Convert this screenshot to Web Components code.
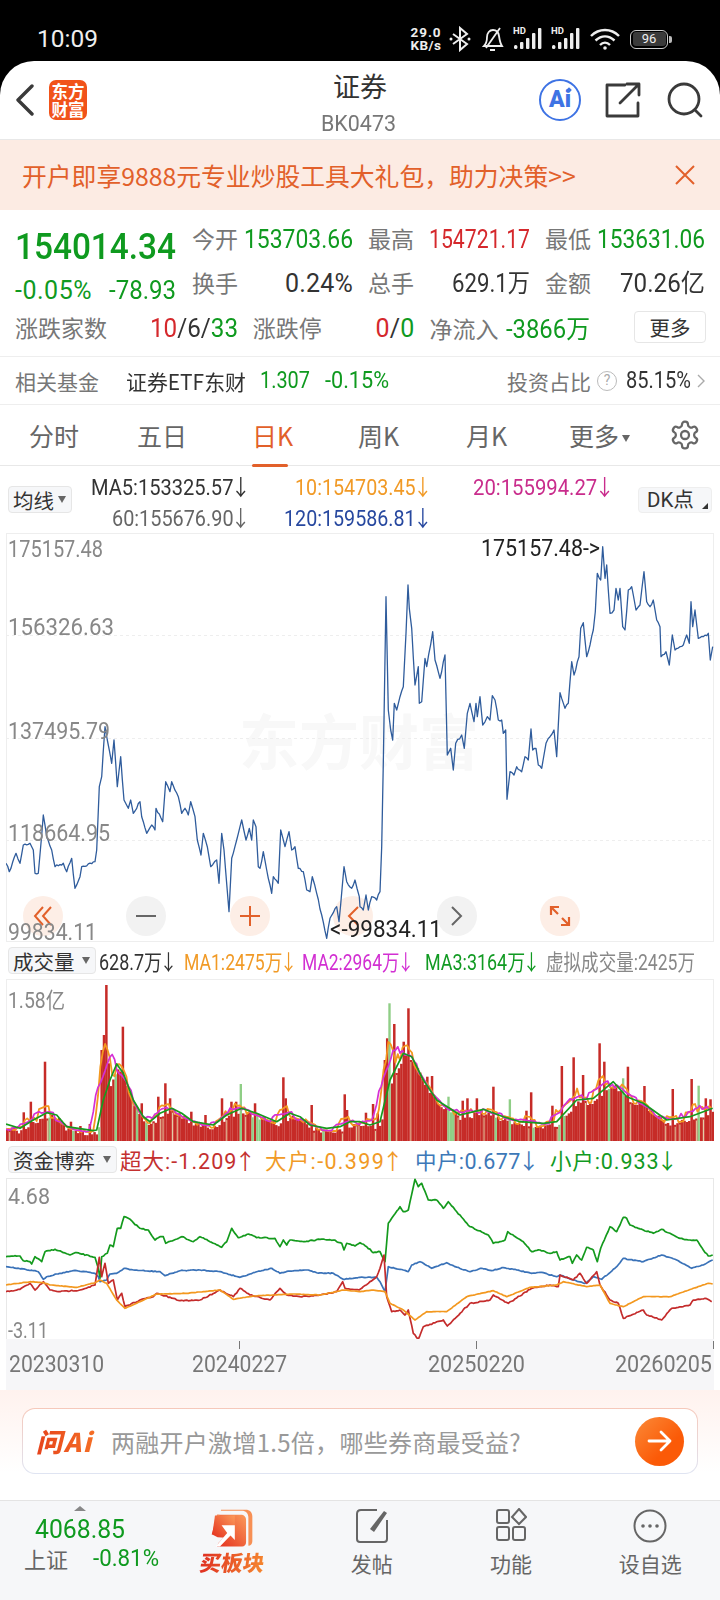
<!DOCTYPE html>
<html lang="zh">
<head>
<meta charset="utf-8">
<title>证券</title>
<style>
  html, body { margin: 0; padding: 0; background: #000; }
  body { width: 720px; height: 1600px; overflow: hidden; font-family: Roboto, "Noto Sans CJK SC", sans-serif; color: #333; }
  main { display: flex; flex-direction: column; height: 1539px; background: #fff; border-radius: 34px 34px 0 0; overflow: hidden; }
  indicator-head i { font-style: normal; font-family: "Noto Sans CJK SC", sans-serif; display: inline-block; margin: 0 -3px; }
</style>
</head>
<body>
<status-bar></status-bar>
<main>
  <stock-header></stock-header>
  <promo-banner>开户即享9888元专业炒股工具大礼包，助力决策&gt;&gt;</promo-banner>
  <quote-panel></quote-panel>
  <fund-row></fund-row>
  <period-tabs></period-tabs>
  <ma-legend></ma-legend>
  <kline-chart></kline-chart>
  <indicator-head>
    <pick-button slot="pick" style="--w:88px">成交量</pick-button>
    <span data-w="76" style="color:#333;margin-right:9px">628.7万<i>↓</i></span>
    <span data-w="111" style="color:#f19a26;margin-right:7px">MA1:2475万<i>↓</i></span>
    <span data-w="110" style="color:#d22fd2;margin-right:13px">MA2:2964万<i>↓</i></span>
    <span data-w="113" style="color:#119a22;margin-right:8px">MA3:3164万<i>↓</i></span>
    <span data-w="149" style="color:#888">虚拟成交量:2425万</span>
  </indicator-head>
  <volume-chart></volume-chart>
  <indicator-head>
    <pick-button slot="pick" style="--w:109px">资金博弈</pick-button>
    <span data-w="134" style="color:#c4302f;margin-right:11px">超大:-1.209<i>↑</i></span>
    <span data-w="137" style="color:#f19a26;margin-right:13px">大户:-0.399<i>↑</i></span>
    <span data-w="122" style="color:#3d78b8;margin-right:13px">中户:0.677<i>↓</i></span>
    <span data-w="126" style="color:#119a22">小户:0.933<i>↓</i></span>
  </indicator-head>
  <flow-chart></flow-chart>
  <date-axis></date-axis>
  <ask-box></ask-box>
  <bottom-nav></bottom-nav>
</main>

<script>
const GREEN = '#0f9a1f', RED = '#d5282c';

// the reference font has narrower digits than anything installed:
// too wide gets squeezed sideways to the measured width, too narrow gets some spacing
function fit(root) {
  root.querySelectorAll('[data-w]').forEach(el => {
    const target = +el.dataset.w;
    el.style.display = 'inline-block';
    el.style.whiteSpace = 'nowrap';
    el.style.flexShrink = '0';
    const w = el.getBoundingClientRect().width;
    if (w > target) {
      el.style.width = target + 'px';
      el.style.transformOrigin = '0 50%';
      el.style.transform = `scaleX(${(target / w).toFixed(3)})`;
    } else {
      el.style.letterSpacing = ((target - w) / el.textContent.length).toFixed(2) + 'px';
    }
  });
}

// small helper, every element is the same shape: css + markup in an open shadow root
function comp(name, css, html, after) {
  customElements.define(name, class extends HTMLElement {
    connectedCallback() {
      this.attachShadow({ mode: 'open' });
      this.shadowRoot.innerHTML = `<style>${css}</style>${html}`;
      if (after) after(this.shadowRoot, this);
      fit(this.shadowRoot);
    }
  });
}

// seeded noise so the charts come out the same each time
let seed = 7;
function rnd() { seed = (seed * 16807) % 2147483647; return seed / 2147483647; }

// zoom crops were taken at 3x, turn those numbers into page coordinates
function pts(arr, ox, oy) { return arr.map(p => [ox + p[0] / 3, oy + p[1] / 3]); }

function jitter(points, amp) {
  const out = [];
  for (let i = 0; i < points.length - 1; i++) {
    const a = points[i], b = points[i + 1];
    out.push(a);
    const n = Math.floor((b[0] - a[0]) / 1.6);
    for (let k = 1; k < n; k++) {
      const t = k / n;
      out.push([a[0] + (b[0] - a[0]) * t, a[1] + (b[1] - a[1]) * t + (rnd() - 0.5) * amp]);
    }
  }
  out.push(points[points.length - 1]);
  return out;
}

function pathOf(points) { return points.map(p => p[0].toFixed(1) + ',' + p[1].toFixed(1)).join(' '); }

function line(points, color, width) {
  return `<polyline points="${pathOf(points)}" fill="none" stroke="${color}" stroke-width="${width}" stroke-linejoin="round"/>`;
}

const SIGNAL = `<svg width="32" height="24" viewBox="0 0 32 24" fill="#eee"><rect x="1" y="18" width="3.400" height="4" rx="1.500"/><rect x="7" y="15" width="3.400" height="7" rx="1"/><rect x="13" y="11" width="3.400" height="11" rx="1"/><rect x="19" y="6" width="3.400" height="16" rx="1"/><rect x="25" y="1" width="3.400" height="21" rx="1"/></svg>`;

comp('status-bar', `
  :host { display: flex; height: 61px; box-sizing: border-box; background: #000; color: #fff; position: relative; }
  .time { font-size: 24.500px; margin: 24px 0 0 37px; color: #eee; line-height: 30px; }
  .right { margin-left: auto; display: flex; align-items: center; height: 30px; margin-top: 24px; padding-right: 48px; }
  .speed { font-size: 13.500px; font-weight: 700; line-height: 13.500px; width: 32px; text-align: center; color: #eee; white-space: nowrap; }
  svg { display: block; }
  .sig { position: relative; width: 32px; height: 24px; margin-left: 6px; }
  .sig b { position: absolute; left: 0; top: -1px; font-size: 9.500px; line-height: 10px; color: #eee; }
  .bat { margin-left: 10px; width: 38px; height: 19px; border: 1.500px solid #ccc; border-radius: 6px; box-sizing: border-box; padding: 1.500px; }
  .bat span { display: block; background: #3a3a3a; height: 100%; border-radius: 3px; color: #eee; font-size: 13px; line-height: 13px; text-align: center; }
  .tip { width: 3px; height: 7px; margin-left: 1px; background: #bbb; border-radius: 0 2px 2px 0; }
`, `
  <div class="time">10:09</div>
  <div class="right">
    <div class="speed"><span data-w="31">29.0</span><br><span data-w="31">KB/s</span></div>
    <svg style="margin-left:7px" width="22" height="26" viewBox="0 0 22 26" fill="none" stroke="#eee" stroke-width="2"><path d="M4 8l14 10-7 6V2l7 6L4 18"/><circle cx="2" cy="13" r="1.500" fill="#eee" stroke="none"/><circle cx="20" cy="13" r="1.500" fill="#eee" stroke="none"/></svg>
    <svg style="margin-left:10px" width="23" height="26" viewBox="0 0 23 26" fill="none" stroke="#eee" stroke-width="1.800"><path d="M3 20c2-2 3-5 3-9 0-4 2.500-7 6-7 3.500 0 5.500 2.500 6 6 .5 3.500 1 7 3 10zM9 24h5"/><path d="M19 2L5 22"/></svg>
    <div class="sig" style="margin-left:9px"><b>HD</b>${SIGNAL}</div>
    <div class="sig"><b>HD</b>${SIGNAL}</div>
    <svg style="margin-left:7px" width="30" height="24" viewBox="0 0 30 24" fill="none" stroke="#eee" stroke-width="2.400"><path d="M1 9c8-8 20-8 28 0M5.500 13.500c6-5.500 13-5.500 19 0M10 18c3-3 7-3 10 0"/><circle cx="15" cy="21" r="1.800" fill="#eee" stroke="none"/></svg>
    <div class="bat"><span>96</span></div><div class="tip"></div>
  </div>
`);

comp('stock-header', `
  :host { display: flex; align-items: center; height: 79px; box-sizing: border-box; border-bottom: 1px solid #e8e8e8; padding-left: 16px; position: relative; }
  .logo { width: 38px; height: 40px; margin-left: 15px; background: #f1531a; border-radius: 7px; color: #fff; font: 700 16.500px/18px "Noto Sans CJK SC", sans-serif; text-align: center; padding-top: 2px; box-sizing: border-box; }
  .title { position: absolute; left: 0; right: 0; top: 8px; text-align: center; font-size: 27px; line-height: 34px; color: #333; font-family: "Noto Sans CJK SC", sans-serif; }
  .code { position: absolute; left: 321px; top: 50px; font-size: 21.500px; line-height: 26px; color: #777; }
  .tools { margin-left: auto; display: flex; align-items: center; }
  svg { display: block; }
  .ai { width: 42px; height: 42px; border: 2px solid #3e73e4; border-radius: 50%; box-sizing: border-box; color: #3e73e4; font: 900 23px/38px Roboto, sans-serif; text-align: center; margin-right: 24px; position: relative; }
  .ai:after { content: ''; position: absolute; right: 8px; top: 7px; width: 4px; height: 4px; background: #3e73e4; transform: rotate(45deg); }
`, `
  <svg width="18" height="32" viewBox="0 0 18 32" fill="none" stroke="#3a3a3a" stroke-width="3.400" stroke-linecap="round" stroke-linejoin="round"><path d="M16 2L2 16l14 14"/></svg>
  <div class="logo">东方<br>财富</div>
  <div class="title">证券</div>
  <div class="code" data-w="75">BK0473</div>
  <div class="tools">
    <div class="ai">Ai</div>
    <svg style="margin-right:26px" width="36" height="36" viewBox="0 0 36 36" fill="none" stroke="#3a3a3a" stroke-width="2.800" stroke-linecap="round" stroke-linejoin="round"><path d="M20 3H2v31h31V21M15 21L33 3M22 2h12v11"/></svg>
    <svg style="margin-right:16px" width="37" height="37" viewBox="0 0 37 37" fill="none" stroke="#3a3a3a" stroke-width="2.800" stroke-linecap="round"><circle cx="17" cy="17" r="15"/><path d="M28 28l6 6"/></svg>
  </div>
`);

comp('promo-banner', `
  :host { display: flex; align-items: center; justify-content: space-between; height: 70px; box-sizing: border-box; padding: 0 25px 0 22px; background: #fcebe3; color: #e2602a; font-size: 24.800px; font-family: "Noto Sans CJK SC", sans-serif; white-space: nowrap; }
`, `<slot></slot><svg width="20" height="20" viewBox="0 0 20 20" fill="none" stroke="#e2602a" stroke-width="2"><path d="M1 1l18 18M19 1L1 19"/></svg>`);

comp('quote-panel', `
  :host { display: block; height: 147px; box-sizing: border-box; border-bottom: 1px solid #eee; padding: 14px 15px 0; font-size: 23px; color: #777; }
  .top { display: flex; height: 81px; }
  .left { width: 177px; flex: none; }
  .price { font-size: 37px; font-weight: 500; color: ${GREEN}; line-height: 46px; white-space: nowrap; width: max-content; }
  .chg { display: flex; justify-content: space-between; color: ${GREEN}; font-size: 25px; line-height: 30px; margin-top: 6px; width: 161px; }
  .grid { display: grid; grid-template-columns: 176px 177px 160px; grid-auto-rows: 44px; margin-top: -4px; }
  .cell { display: flex; justify-content: space-between; align-items: baseline; padding-right: 15px; line-height: 36px; white-space: nowrap; font-family: "Noto Sans CJK SC", sans-serif; }
  .cell:nth-child(3n) { padding-right: 0; }
  .cell b { font-family: Roboto, "Noto Sans CJK SC", sans-serif; font-weight: 400; font-size: 25px; }
  .g { color: ${GREEN}; } .r { color: ${RED}; } .k { color: #333; }
  .row { display: flex; align-items: center; height: 44px; font-family: "Noto Sans CJK SC", sans-serif; }
  .row > div { display: flex; justify-content: space-between; align-items: baseline; white-space: nowrap; }
  .row b { font-family: Roboto, "Noto Sans CJK SC", sans-serif; font-weight: 400; font-size: 25px; color: #333; }
  .more { width: 72px; height: 32px; border: 1px solid #e6e6e6; border-radius: 4px; box-sizing: border-box; color: #333; font-size: 20.500px; justify-content: center !important; align-items: center !important; }
`, `
  <div class="top">
    <div class="left">
      <div class="price" data-w="161">154014.34</div>
      <div class="chg"><span data-w="77">-0.05%</span><span data-w="67">-78.93</span></div>
    </div>
    <div class="grid">
      <div class="cell">今开<b class="g" data-w="109">153703.66</b></div>
      <div class="cell">最高<b class="r" data-w="101">154721.17</b></div>
      <div class="cell">最低<b class="g" data-w="108">153631.06</b></div>
      <div class="cell">换手<b class="k" data-w="68">0.24%</b></div>
      <div class="cell">总手<b class="k" data-w="78">629.1万</b></div>
      <div class="cell">金额<b class="k" data-w="85">70.26亿</b></div>
    </div>
  </div>
  <div class="row">
    <div style="width:223px;margin-right:15px">涨跌家数<b data-w="88"><span class="r">10</span>/6/<span class="g">33</span></b></div>
    <div style="width:162px;margin-right:15px">涨跌停<b data-w="39"><span class="r">0</span>/<span class="g">0</span></b></div>
    <div style="width:161px">净流入<b data-w="84" style="color:${GREEN}">-3866万</b></div>
    <div class="more" style="margin-left:44px;margin-right:-1px">更多</div>
  </div>
`);

comp('fund-row', `
  :host { display: flex; align-items: center; height: 48px; box-sizing: border-box; border-bottom: 1px solid #eee; padding: 0 15px; font-size: 21px; color: #333; white-space: nowrap; font-family: "Noto Sans CJK SC", sans-serif; }
  .lab { color: #777; width: 111px; flex: none; }
  .g { color: ${GREEN}; font-family: Roboto, sans-serif; font-size: 23px; }
  .right { margin-left: auto; display: flex; align-items: center; }
  .q { width: 20px; height: 20px; border: 1.500px solid #bbb; border-radius: 50%; box-sizing: border-box; color: #aaa; font: 400 14px/17px Roboto, sans-serif; text-align: center; margin: 0 9px 0 6px; }
  .p { font-family: Roboto, sans-serif; font-size: 23px; }
  svg { display: block; margin-left: 6px; }
`, `
  <div class="lab">相关基金</div>
  <div data-w="120" style="margin-right:14px">证券ETF东财</div>
  <div class="g" data-w="50" style="margin-right:15px">1.307</div>
  <div class="g" data-w="64">-0.15%</div>
  <div class="right"><span style="color:#777">投资占比</span><div class="q">?</div><span class="p" data-w="65">85.15%</span>
    <svg width="8" height="14" viewBox="0 0 8 14" fill="none" stroke="#aaa" stroke-width="1.400"><path d="M1 1l6 6-6 6"/></svg></div>
`);

comp('period-tabs', `
  :host { display: grid; grid-template-columns: 108px 115px 106px 108px 103px 100px 1fr; align-items: center; height: 61px; box-sizing: border-box; border-bottom: 1px solid #e8e8e8; padding: 0 20px 0 29px; font-size: 25px; color: #666; font-family: "Noto Sans CJK SC", sans-serif; position: relative; }
  div { white-space: nowrap; line-height: 40px; }
  .on { color: #e2602a; position: relative; justify-self: start; }
  .on:after { content: ''; position: absolute; left: 0; bottom: -12px; width: 36px; height: 3px; border-radius: 2px; background: #e2602a; }
  em { font-style: normal; display: inline-block; width: 0; height: 0; border: 4px solid transparent; border-top: 7px solid #666; border-bottom: 0; margin-left: 3px; vertical-align: 4px; }
  svg { display: block; }
`, `
  <div>分时</div><div>五日</div><div class="on">日K</div><div>周K</div><div>月K</div><div>更多<em></em></div>
  <svg width="32" height="32" viewBox="0 0 24 24" fill="none" stroke="#666" stroke-width="1.700" stroke-linecap="round" stroke-linejoin="round"><path d="M12.220 2h-.44a2 2 0 0 0-2 2v.18a2 2 0 0 1-1 1.730l-.43.25a2 2 0 0 1-2 0l-.15-.08a2 2 0 0 0-2.730.73l-.22.38a2 2 0 0 0 .73 2.730l.15.1a2 2 0 0 1 1 1.720v.51a2 2 0 0 1-1 1.740l-.15.09a2 2 0 0 0-.73 2.730l.22.38a2 2 0 0 0 2.730.73l.15-.08a2 2 0 0 1 2 0l.43.25a2 2 0 0 1 1 1.730V20a2 2 0 0 0 2 2h.44a2 2 0 0 0 2-2v-.18a2 2 0 0 1 1-1.730l.43-.25a2 2 0 0 1 2 0l.15.08a2 2 0 0 0 2.730-.73l.22-.39a2 2 0 0 0-.73-2.730l-.15-.08a2 2 0 0 1-1-1.740v-.5a2 2 0 0 1 1-1.740l.15-.09a2 2 0 0 0 .73-2.730l-.22-.38a2 2 0 0 0-2.730-.73l-.15.08a2 2 0 0 1-2 0l-.43-.25a2 2 0 0 1-1-1.730V4a2 2 0 0 0-2-2z"/><circle cx="12" cy="12" r="3"/></svg>
`);

comp('pick-button', `
  :host { display: inline-flex; align-items: center; justify-content: space-between; width: var(--w, 64px); height: 27px; box-sizing: border-box; background: #f6f7f9; border: 1px solid #e6e6e6; border-radius: 4px; padding: 0 5px 0 4px; color: #333; font-size: 20.500px; letter-spacing: 0; font-family: "Noto Sans CJK SC", sans-serif; white-space: nowrap; flex: none; }
  em { width: 0; height: 0; border: 4px solid transparent; border-top: 7px solid #666; border-bottom: 0; }
`, `<slot></slot><em></em>`);

comp('ma-legend', `
  :host { display: flex; height: 64px; align-items: center; padding: 0 8px; box-sizing: border-box; font-size: 22px; white-space: nowrap; }
  .rows { display: grid; grid-template-columns: 176px 182px 182px; grid-auto-rows: 31px; justify-items: end; margin-top: 5px; flex: none; align-items: center; }
  i { font-style: normal; font-family: "Noto Sans CJK SC", sans-serif; display: inline-block; margin: 0 -3px; }
  pick-button { margin-top: 3px; }
  .dk { margin-left: auto; width: 74px; height: 26px; margin-top: 3px; background: #f6f7f9; border: 1px solid #eee; border-radius: 4px; box-sizing: border-box; color: #333; font-size: 20.500px; font-family: Roboto, "Noto Sans CJK SC", sans-serif; line-height: 24px; padding-left: 8px; position: relative; }
  .dk:after { content: ''; position: absolute; right: 3px; bottom: 3px; border: 3px solid transparent; border-right-color: #333; border-bottom-color: #333; }
`, `
  <pick-button style="--w:64px">均线</pick-button>
  <div class="rows">
    <span data-w="157" style="color:#333">MA5:153325.57<i>↓</i></span>
    <span data-w="135" style="color:#f19a26">10:154703.45<i>↓</i></span>
    <span data-w="139" style="color:#c92c8c">20:155994.27<i>↓</i></span>
    <span data-w="136" style="color:#666">60:155676.90<i>↓</i></span>
    <span data-w="146" style="color:#27489f">120:159586.81<i>↓</i></span>
  </div>
  <div class="dk">DK点</div>
`);

const PRICE_A = [[18,1000],[28,1025],[48,970],[60,1000],[70,945],[90,940],[100,960],[105,1030],[115,1030],[130,855],[140,920],[155,960],[165,1010],[190,1000],[200,1025],[215,985],[225,1075],[240,1040],[245,1010],[285,995],[290,960],[298,770],[305,740],[315,590],[322,630],[335,700],[342,630],[352,770],[362,680],[372,810],[385,835],[392,810],[400,850],[420,815],[425,860],[440,910],[455,885],[465,900],[468,835],[488,875],[497,755],[510,785],[515,755],[535,800],[545,850],[555,835],[565,855],[572,815],[585,860],[592,930],[603,975],[610,910],[622,950],[632,1010],[650,990],[657,1060],[665,910],[672,960],[687,1145],[695,985],[710,930],[725,870],[738,930],[748,895],[755,930],[760,870],[768,890],[775,1010],[780,1015],[790,965],[800,1020],[815,1090],[820,1040],[835,1060],[842,900],[855,950],[867,905],[875,960],[885,950],[895,1015],[910,1025],[920,1080],[930,1085],[937,1040],[950,1090],[965,1155],[980,1225],[990,1165],[1010,1130],[1017,1175],[1032,1010],[1040,1055],[1055,1075],[1065,1050],[1078,1100]];
const PRICE_B = [[0,1130],[10,1140],[18,1095],[25,1140],[35,1100],[50,1110],[60,1085],[65,950],[70,700],[78,200],[85,540],[92,600],[98,630],[103,520],[110,540],[120,500],[130,470],[138,310],[144,165],[148,235],[155,295],[165,465],[175,410],[178,520],[185,515],[195,385],[200,410],[218,305],[225,390],[240,445],[255,375],[262,675],[272,655],[280,720],[287,640],[305,615],[313,655],[322,550],[330,520],[342,575],[348,520],[352,560],[360,500],[368,585],[382,560],[390,570],[397,497],[405,510],[415,570],[425,570],[430,610],[437,600],[441,808],[450,725],[462,735],[470,710],[485,725],[495,680],[505,690],[513,597],[518,660],[528,655],[535,705],[545,715],[558,640],[570,620],[582,600],[590,680],[600,488],[615,535],[625,520],[635,395],[642,435],[657,380],[662,295],[670,278],[680,380],[690,345],[700,300],[706,245],[712,130],[722,150],[728,50],[735,145],[740,105],[750,250],[762,240],[768,175],[775,210],[780,175],[788,290],[795,300],[805,180],[815,170],[820,195],[828,240],[840,225],[852,125],[860,215],[870,230],[880,210],[890,270],[900,290],[903,380],[918,365],[928,405],[937,315],[945,360],[960,350],[970,345],[980,315],[988,340],[993,215],[998,290],[1005,240],[1015,325],[1030,320],[1045,310],[1051,390],[1058,350]];

comp('kline-chart', `
  :host { display: block; position: relative; height: 409px; margin: 3px 6px 0; box-sizing: border-box; border: 1px solid #eee; flex: none; }
  #plot { position: absolute; left: -1px; top: -1px; }
  .lab { position: absolute; left: 1px; font-size: 23px; line-height: 24px; color: #888; white-space: nowrap; }
  .tag { position: absolute; font-size: 23px; line-height: 24px; color: #222; white-space: nowrap; }
  .wm { position: absolute; left: 232px; top: 170px; font: 700 60px/70px "Noto Sans CJK SC", sans-serif; color: #f8f8f8; white-space: nowrap; }
  .tools { position: absolute; left: 16px; right: 133px; top: 362px; display: flex; justify-content: space-between; }
  .tools div { width: 40px; height: 40px; border-radius: 50%; display: flex; align-items: center; justify-content: center; background: #fdeee6; }
  .tools .n { background: #f2f2f2; }
  .tools svg { display: block; }
`, `
  <div class="wm">东方财富</div>
  <div class="tools">
    <div><svg width="20" height="22" viewBox="0 0 20 22" fill="none" stroke="#e2602a" stroke-width="2"><path d="M10 2L2 11l8 9M18 2l-8 9 8 9"/></svg></div>
    <div class="n"><svg width="20" height="4" viewBox="0 0 20 4" fill="none" stroke="#666" stroke-width="2"><path d="M0 2h20"/></svg></div>
    <div><svg width="20" height="20" viewBox="0 0 20 20" fill="none" stroke="#e2602a" stroke-width="2"><path d="M0 10h20M10 0v20"/></svg></div>
    <div><svg width="12" height="22" viewBox="0 0 12 22" fill="none" stroke="#e2602a" stroke-width="2"><path d="M11 2L2 11l9 9"/></svg></div>
    <div class="n"><svg width="12" height="22" viewBox="0 0 12 22" fill="none" stroke="#666" stroke-width="2"><path d="M1 2l9 9-9 9"/></svg></div>
    <div><svg width="22" height="22" viewBox="0 0 22 22" fill="none" stroke="#e2602a" stroke-width="2.200"><path d="M2 10V2h8M2 2l7 7M20 12v8h-8M20 20l-7-7"/></svg></div>
  </div>
  <svg id="plot" width="708" height="409" viewBox="6 533 708 409"></svg>
  <div class="lab" data-w="95" style="top:4px">175157.48</div>
  <div class="lab" data-w="106" style="top:82px">156326.63</div>
  <div class="lab" data-w="102" style="top:186px">137495.79</div>
  <div class="lab" data-w="102" style="top:288px">118664.95</div>
  <div class="lab" data-w="89" style="top:387px">99834.11</div>
  <div class="tag" data-w="119" style="left:474px;top:3px">175157.48-&gt;</div>
  <div class="tag" data-w="112" style="left:323px;top:384px">&lt;-99834.11</div>
`, (root) => {
  const all = pts(PRICE_A, 0, 530).concat(pts(PRICE_B, 360, 530));
  let grid = '';
  [635, 738, 840].forEach(y => { grid += `<path d="M6 ${y + .5}H714" stroke="#eee" stroke-dasharray="3 3"/>`; });
  root.getElementById('plot').innerHTML = grid + line(jitter(all, 2.4), '#2f5c9c', 1.3);
});

comp('indicator-head', `
  :host { display: flex; align-items: center; height: 37px; padding: 0 0 0 8px; box-sizing: border-box; font-size: 21.500px; white-space: nowrap; flex: none; }
  ::slotted(span) { display: inline-block; flex: none; }
`, `<slot name="pick"></slot><div style="width:3px;flex:none"></div><slot></slot>`);

const VOL_A = [[18,552],[60,565],[100,540],[140,518],[170,525],[200,560],[280,572],[290,570],[310,480],[330,420],[350,372],[370,400],[400,480],[430,530],[450,545],[480,520],[515,505],[545,520],[580,545],[640,555],[680,525],[725,505],[770,520],[830,545],[870,520],[900,530],[930,555],[980,565],[1020,560],[1050,545],[1078,545]];
const VOL_B = [[0,545],[30,555],[60,545],[90,420],[130,340],[155,350],[190,420],[230,480],[300,525],[370,508],[430,530],[480,545],[550,550],[590,545],[650,480],[700,475],[760,425],[800,470],[850,490],[920,540],[990,530],[1058,505]];
const SPIKE_A = [[130,365],[92,485],[65,517],[210,545],[240,558],[265,552],[300,330],[305,285],[315,135],[325,370],[362,260],[420,490],[468,470],[495,430],[505,475],[570,515],[610,525],[665,475],[690,485],[705,485],[722,432,1],[760,490],[843,412],[850,475],[933,495],[1033,463],[1040,510]];
const SPIKE_B = [[15,518],[33,492],[50,520],[70,360],[75,295],[82,120,1],[85,190,1],[102,252],[130,305],[145,205],[195,410],[212,408],[262,470,1],[305,482],[322,475],[350,475],[395,440],[443,478,1],[497,512],[513,457],[570,497],[603,378],[635,352],[662,405],[713,310],[728,365],[783,415,1],[803,380],[850,438],[935,447],[993,417],[1010,437,1],[1033,475],[1050,478]];

comp('volume-chart', `
  :host { display: block; position: relative; height: 162px; margin: 0 6px; box-sizing: border-box; border: 1px solid #eee; border-bottom: 0; flex: none; }
  svg { position: absolute; left: -1px; top: -1px; }
  .lab { position: absolute; left: 1px; top: 8px; font-size: 21.500px; line-height: 26px; color: #888; white-space: nowrap; }
`, `
  <svg id="plot" width="708" height="162" viewBox="6 979 708 162"></svg>
  <div class="lab" data-w="57">1.58亿</div>
`, (root) => {
  const base = 1141, step = 2.36, count = 300;
  const ma = pts(VOL_A, 0, 940).concat(pts(VOL_B, 360, 940));
  const at = x => {
    for (let i = 0; i < ma.length - 1; i++) {
      if (x >= ma[i][0] && x <= ma[i + 1][0]) {
        const t = (x - ma[i][0]) / ((ma[i + 1][0] - ma[i][0]) || 1);
        return ma[i][1] + (ma[i + 1][1] - ma[i][1]) * t;
      }
    }
    return ma[ma.length - 1][1];
  };
  const tops = [], kind = [];
  for (let i = 0; i < count; i++) {
    const x = 6 + i * step;
    tops.push(Math.min(base - 3, at(x) + 1 + rnd() * 5));
    const r = rnd();
    kind.push(r > 0.94 ? 2 : r > 0.84 ? 1 : 0);
  }
  pts(SPIKE_A, 0, 940).concat(pts(SPIKE_B, 360, 940)).forEach((p, n) => {
    const src = n < SPIKE_A.length ? SPIKE_A[n] : SPIKE_B[n - SPIKE_A.length];
    const i = Math.round((p[0] - 6) / step);
    if (i >= 0 && i < count) { tops[i] = p[1]; kind[i] = src[2] ? 2 : 0; }
  });
  let bars = '';
  // solid red block first, the pale up-bars read as thin lines over it
  tops.forEach((t, i) => {
    if (kind[i] !== 2) bars += `<rect x="${(6 + i * step).toFixed(2)}" y="${t.toFixed(1)}" width="2.500" height="${(base - t).toFixed(1)}" fill="#c62b27"/>`;
  });
  tops.forEach((t, i) => {
    const x = 6 + i * step;
    if (kind[i] === 1) bars += `<rect x="${(x + .8).toFixed(2)}" y="${(t + 2).toFixed(1)}" width="1" height="${(base - t - 2).toFixed(1)}" fill="#e4cda4"/>`;
    if (kind[i] === 2) bars += `<rect x="${x.toFixed(2)}" y="${t.toFixed(1)}" width="2.360" height="${(base - t).toFixed(1)}" fill="#8fce86"/>`;
  });
  // moving averages straight from the bars
  const avg = (win, shift) => tops.map((t, i) => {
    let sum = 0, n = 0;
    for (let k = i - win + 1 + shift; k <= i + shift; k++) if (k >= 0 && k < count) { sum += base - tops[k]; n++; }
    return [6 + i * step, base - sum / n];
  });
  root.getElementById('plot').innerHTML = bars
    + line(avg(5, 2), '#f3981f', 1.8)
    + line(avg(9, 4), '#d52fd5', 1.7)
    + line(ma, '#179a1f', 1.7);
});

const F_GREEN = [[[18,350],[60,348],[70,362],[90,365],[95,372],[105,350],[125,365],[135,335],[165,328],[210,345],[230,338],[285,352],[295,385],[300,415],[305,350],[322,340],[330,315],[340,320],[352,265],[362,265],[372,230],[385,235],[420,265],[445,270],[465,300],[480,290],[490,290],[497,310],[545,290],[580,305],[600,290],[640,310],[665,322],[680,305],[695,265],[715,293],[745,282],[770,293],[825,295],[840,320],[850,300],[860,315],[870,300],[915,305],[960,298],[1000,300],[1025,310],[1032,330],[1040,310],[1065,318],[1078,310]],
  [[0,308],[20,320],[40,338],[60,335],[75,365],[85,250],[100,228],[120,200],[130,215],[145,210],[165,118],[175,140],[185,130],[205,180],[230,180],[250,205],[265,185],[290,215],[330,260],[385,285],[400,310],[435,300],[443,275],[490,305],[515,335],[540,330],[570,340],[590,335],[600,360],[630,350],[637,370],[650,345],[665,360],[680,322],[700,330],[712,365],[722,325],[750,260],[770,275],[790,232],[800,235],[810,255],[850,270],[880,280],[905,268],[930,280],[960,295],[990,300],[1010,300],[1030,330],[1045,348],[1058,345]]];
const F_BLUE = [[[18,380],[50,385],[100,392],[115,395],[130,418],[140,410],[170,402],[220,392],[260,395],[285,400],[295,410],[300,425],[320,420],[330,402],[350,400],[372,385],[400,390],[440,393],[480,395],[495,407],[540,392],[600,390],[660,395],[720,412],[770,395],[815,385],[840,400],[870,393],[925,390],[950,398],[1000,400],[1030,418],[1078,412]],
  [[0,412],[50,412],[60,425],[75,455],[85,380],[120,388],[145,395],[155,375],[180,365],[215,385],[260,368],[285,380],[330,395],[365,385],[395,392],[430,383],[470,390],[515,400],[545,397],[590,410],[600,405],[640,420],[675,430],[700,410],[725,418],[770,380],[790,355],[850,365],[905,345],[950,360],[995,385],[1030,375],[1058,360]]];
const F_ORANGE = [[[18,435],[90,425],[130,428],[150,435],[230,442],[285,428],[300,420],[320,430],[350,480],[375,505],[420,485],[470,462],[560,460],[660,450],[700,478],[760,468],[820,465],[880,462],[960,465],[1030,450],[1078,455]],
  [[0,455],[40,450],[75,455],[90,490],[130,510],[165,540],[200,515],[260,515],[320,470],[400,452],[440,470],[510,442],[590,435],[610,425],[680,440],[720,435],[750,490],[790,500],[850,470],[930,470],[1000,445],[1045,430],[1058,432]]];
const F_RED = [[[18,455],[60,448],[90,430],[105,450],[130,425],[150,450],[180,455],[240,450],[285,435],[298,352],[305,410],[315,370],[325,430],[340,420],[352,480],[365,460],[375,500],[420,480],[460,470],[470,460],[540,482],[600,480],[660,450],[700,470],[720,445],[750,465],[810,480],[840,445],[860,465],[900,470],[960,465],[1010,455],[1028,425],[1035,445],[1078,450]],
  [[0,448],[25,430],[50,410],[60,385],[72,345],[80,470],[95,515],[120,510],[135,525],[145,510],[160,580],[175,598],[190,560],[250,540],[262,558],[330,490],[390,480],[400,465],[445,490],[515,445],[570,435],[595,440],[600,405],[640,420],[660,400],[680,430],[710,395],[720,435],[750,480],[775,490],[790,535],[850,510],[860,525],[905,540],[935,505],[990,495],[1000,480],[1035,475],[1055,485]]];

comp('flow-chart', `
  :host { display: block; position: relative; height: 161px; margin: 0 6px; box-sizing: border-box; border: 1px solid #e8e8e8; border-bottom: 0; flex: none; }
  svg { position: absolute; left: -1px; top: -1px; }
  .lab { position: absolute; left: 1px; font-size: 22px; line-height: 22px; color: #888; white-space: nowrap; }
`, `
  <svg id="plot" width="708" height="161" viewBox="6 1178 708 161"></svg>
  <div class="lab" data-w="42" style="top:7px">4.68</div>
  <div class="lab" data-w="40" style="top:141px">-3.11</div>
`, (root) => {
  const draw = (set, color, amp) => line(jitter(pts(set[0], 0, 1140).concat(pts(set[1], 360, 1140)), amp), color, 1.7);
  root.getElementById('plot').innerHTML = draw(F_GREEN, '#149a1d', 1.1) + draw(F_BLUE, '#3a72b8', .8) + draw(F_RED, '#c42b2b', 1.1) + draw(F_ORANGE, '#f3981f', .4);
});

comp('date-axis', `
  :host { display: flex; height: 51px; margin-left: 6px; width: 708px; background: #f6f6f8; position: relative; flex: none; box-sizing: border-box; padding: 13px 0 0 3px; font-size: 23px; line-height: 26px; color: #777; }
  .t { position: absolute; top: 2px; width: 1px; height: 8px; background: #777; }
  span { display: block; white-space: nowrap; }
`, `
  <i class="t" style="left:233px"></i><i class="t" style="left:470px"></i><i class="t" style="left:707px"></i>
  <span data-w="95">20230310</span><span data-w="95" style="margin-left:88px">20240227</span><span data-w="97" style="margin-left:141px">20250220</span><span data-w="97" style="margin-left:90px">20260205</span>
`);

comp('ask-box', `
  :host { display: block; height: 110px; box-sizing: border-box; padding: 18px 22px 0; background: linear-gradient(#fff2ee, #fff 75%); flex: none; }
  .box { display: flex; align-items: center; height: 66px; box-sizing: border-box; border: 1.500px solid transparent; border-radius: 13px; background: linear-gradient(#fff, #fff) padding-box, linear-gradient(#f6c8ba, #dfe4f2) border-box; padding: 0 13px; }
  .ai { font: italic 900 26px/30px "Noto Sans CJK SC", sans-serif; background: linear-gradient(90deg, #e6431c, #f97a28); -webkit-background-clip: text; background-clip: text; color: transparent; width: 75px; flex: none; white-space: nowrap; }
  .q { font-size: 24px; color: #999; font-family: "Noto Sans CJK SC", sans-serif; white-space: nowrap; }
  .go { margin-left: auto; width: 49px; height: 49px; border-radius: 50%; background: linear-gradient(135deg, #fb8a38, #fb5a07 65%); display: flex; align-items: center; justify-content: center; }
`, `
  <div class="box">
    <div class="ai"><span data-w="57">问Ai</span></div>
    <div class="q" data-w="410">两融开户激增1.5倍，哪些券商最受益?</div>
    <div class="go"><svg width="25" height="22" viewBox="0 0 25 22" fill="none" stroke="#fff" stroke-width="2.800" stroke-linecap="round" stroke-linejoin="round"><path d="M2 11h21M14 2l9 9-9 9"/></svg></div>
  </div>
`);

comp('nav-item', `
  :host { display: flex; flex-direction: column; align-items: center; width: 140px; font-size: 21px; color: #666; font-family: "Noto Sans CJK SC", sans-serif; }
  .i { height: 40px; margin-top: 7px; }
  .l { line-height: 28px; margin-top: 1px; }
`, `<div class="i"><slot name="icon"></slot></div><div class="l"><slot></slot></div>`);

comp('bottom-nav', `
  :host { display: flex; height: 100px; box-sizing: border-box; background: #f6f7f9; border-top: 1px solid #e4e4e4; flex: none; position: relative; }
  .idx { width: 178px; flex: none; position: relative; }
  .tri { position: absolute; left: 74px; top: 5px; border: 6px solid transparent; border-bottom: 5px solid #888; border-top: 0; }
  .val { position: absolute; left: 35px; top: 14px; color: ${GREEN}; font-size: 25px; line-height: 30px; }
  .sub { position: absolute; left: 24px; top: 42px; font-size: 22px; line-height: 30px; color: #666; font-family: "Noto Sans CJK SC", sans-serif; display: flex; width: 135px; justify-content: space-between; }
  .sub b { font: 400 23.500px/30px Roboto, sans-serif; color: ${GREEN}; }
  .buy { width: 116px; flex: none; display: flex; flex-direction: column; align-items: center; margin-left: -4px; }
  .buy svg { margin-top: 7px; }
  .buy div { font: 900 21.500px/28px "Noto Sans CJK SC", sans-serif; background: linear-gradient(90deg, #df2f22, #f5872f); -webkit-background-clip: text; background-clip: text; color: transparent; transform: skewX(-8deg); }
  svg { display: block; }
`, `
  <div class="idx"><i class="tri"></i><div class="val" data-w="90">4068.85</div><div class="sub">上证<b data-w="66">-0.81%</b></div></div>
  <div class="buy">
    <svg width="43" height="40" viewBox="60 20 130 120"><defs><linearGradient id="o" x1="0" y1="1" x2="1" y2="0"><stop offset="0" stop-color="#e4301e"/><stop offset="1" stop-color="#fb9a5a"/></linearGradient></defs>
      <path d="M90 25h75c12 0 20 8 20 20v75c0 8-5 14-12 14V48c0-12-8-20-20-20H90z" fill="#f79055"/>
      <path d="M78 40h72c10 0 16 6 16 16v68c0 7-5 12-12 12H78l4-10 34-36-25-2z" fill="url(#o)"/>
      <path d="M78 40h8L68 100l-6 0z" fill="url(#o)"/>
      <path d="M72 42h60v52l-16 16-36-2-16-8z" fill="url(#o)"/>
      <path d="M92 72h40v44l-13-13-32 33H74l35-41z" fill="#fff"/></svg>
    <div>买板块</div>
  </div>
  <nav-item style="margin-left:12px"><svg slot="icon" width="34" height="36" viewBox="0 0 34 36" fill="none" stroke="#666" stroke-width="2"><path d="M22 2H6C3 2 2 3 2 6v25c0 2 1 3 3 3h24c2 0 3-1 3-3V12"/><path d="M15 21L29 3l3 2-13 19z" fill="#666" stroke="none"/></svg>发帖</nav-item>
  <nav-item><svg slot="icon" width="32" height="34" viewBox="0 0 32 34" fill="none" stroke="#666" stroke-width="2"><rect x="2" y="2" width="12" height="13" rx="2"/><rect x="2" y="19" width="12" height="13" rx="2"/><rect x="18" y="19" width="12" height="13" rx="2"/><path d="M24 1l7 8-7 7-7-7z"/></svg>功能</nav-item>
  <nav-item><svg slot="icon" width="36" height="36" viewBox="0 0 36 36" fill="none" stroke="#666" stroke-width="2"><circle cx="18" cy="18" r="15.500"/><g fill="#666" stroke="none"><circle cx="11" cy="18" r="1.800"/><circle cx="18" cy="18" r="1.800"/><circle cx="25" cy="18" r="1.800"/></g></svg>设自选</nav-item>
`);

// the indicator spans live in the light dom, squeeze them now everything is laid out
fit(document);
</script>
</body>
</html>
